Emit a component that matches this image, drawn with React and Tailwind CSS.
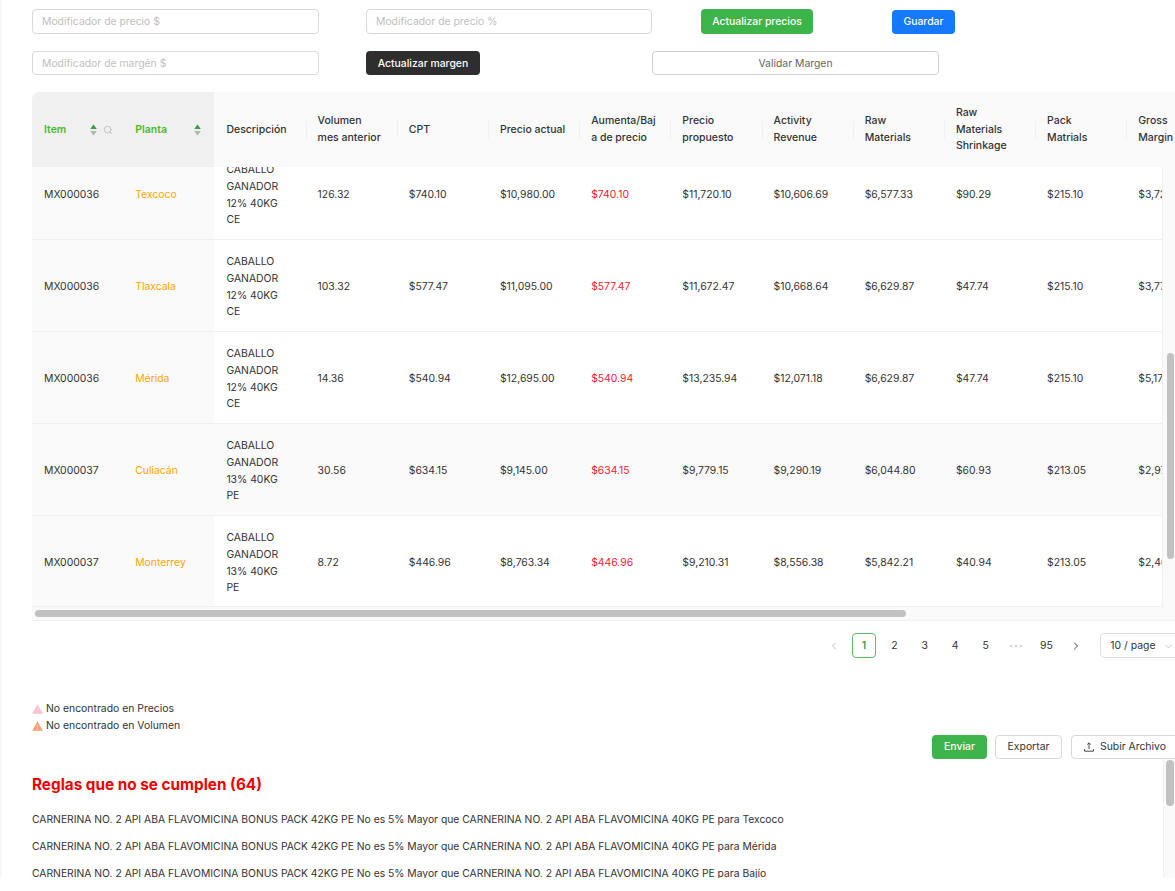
import React from 'react'
import { ChevronLeft, ChevronRight, ChevronDown, Search } from 'lucide-react'

const font = { fontFamily: 'Inter, sans-serif' }

const columns = [
  { title: ['Descripción'] },
  { title: ['Volumen', 'mes anterior'] },
  { title: ['CPT'] },
  { title: ['Precio actual'] },
  { title: ['Aumenta/Baj', 'a de precio'] },
  { title: ['Precio', 'propuesto'] },
  { title: ['Activity', 'Revenue'] },
  { title: ['Raw', 'Materials'] },
  { title: ['Raw', 'Materials', 'Shrinkage'] },
  { title: ['Pack', 'Matrials'] },
  { title: ['Gross', 'Margin'] },
]

const rows = [
  ['MX000036', 'Texcoco', '12% 40KG', 'CE', '126.32', '$740.10', '$10,980.00', '$740.10', '$11,720.10', '$10,606.69', '$6,577.33', '$90.29', '$215.10', '$3,723.97'],
  ['MX000036', 'Tlaxcala', '12% 40KG', 'CE', '103.32', '$577.47', '$11,095.00', '$577.47', '$11,672.47', '$10,668.64', '$6,629.87', '$47.74', '$215.10', '$3,775.93'],
  ['MX000036', 'Mérida', '12% 40KG', 'CE', '14.36', '$540.94', '$12,695.00', '$540.94', '$13,235.94', '$12,071.18', '$6,629.87', '$47.74', '$215.10', '$5,178.47'],
  ['MX000037', 'Culiacán', '13% 40KG', 'PE', '30.56', '$634.15', '$9,145.00', '$634.15', '$9,779.15', '$9,290.19', '$6,044.80', '$60.93', '$213.05', '$2,971.41'],
  ['MX000037', 'Monterrey', '13% 40KG', 'PE', '8.72', '$446.96', '$8,763.34', '$446.96', '$9,210.31', '$8,556.38', '$5,842.21', '$40.94', '$213.05', '$2,460.18'],
]

const rules = ['Texcoco', 'Mérida', 'Bajío']

function SortIcon() {
  return (
    <svg width="7" height="12" viewBox="0 0 7 12" className="block shrink-0">
      <path d="M3.5 0.5 L6.8 5 H0.2 Z" fill="#3a9d48" />
      <path d="M3.5 11.5 L6.8 7 H0.2 Z" fill="#b4b4b4" />
    </svg>
  )
}

function WarnIcon({ color }) {
  return (
    <svg width="11" height="10" viewBox="0 0 11 10" className="shrink-0">
      <path d="M5.5 0.3 L10.9 9.7 H0.1 Z" fill={color} />
      <path d="M5.5 3.6 V6.6 M5.5 7.4 V8.2" stroke="#fff" strokeOpacity="0.45" strokeWidth="0.9" />
    </svg>
  )
}

function UploadIcon() {
  return (
    <svg width="10" height="10" viewBox="0 0 10 10" fill="none" stroke="#333" strokeWidth="0.9" className="shrink-0">
      <path d="M5 7 V1 M3.2 2.6 L5 0.8 L6.8 2.6" />
      <path d="M0.6 7 V9.2 H9.4 V7" />
    </svg>
  )
}

function Cell({ children, className = '' }) {
  return <div className={`w-[91.2px] shrink-0 overflow-hidden whitespace-nowrap px-3 pt-[4px] ${className}`}>{children}</div>
}

function Row({ row, index }) {
  const [item, planta, d1, d2, volumen, cpt, actual, aumenta, ...rest] = row
  const shaded = index === 3
  return (
    <div className={`flex h-[92px] shrink-0 items-center border-b border-[#f0f0f0] ${shaded ? 'bg-[#fafafa]' : 'bg-white'}`}>
      <Cell className="flex h-full items-center bg-[#fafafa]">{item}</Cell>
      <Cell className="flex h-full items-center bg-[#fafafa] text-[#ffa500]">{planta}</Cell>
      <Cell>
        <div>CABALLO</div>
        <div>GANADOR</div>
        <div>{d1}</div>
        <div>{d2}</div>
      </Cell>
      <Cell>{volumen}</Cell>
      <Cell>{cpt}</Cell>
      <Cell>{actual}</Cell>
      <Cell className="text-[#f5222d]">{aumenta}</Cell>
      {rest.map((value, i) => (
        <Cell key={i} className="!overflow-visible">{value}</Cell>
      ))}
    </div>
  )
}

function PageButton({ children, active }) {
  return (
    <div className={`flex h-[25px] w-6 shrink-0 items-center justify-center rounded pt-px ${active ? 'border border-[#5cbf6a] font-semibold text-[#3a9d48]' : ''}`}>
      {children}
    </div>
  )
}

export default function App() {
  return (
    <div style={font} className="relative h-[891px] w-[1175px] overflow-hidden bg-white text-[10.4px] leading-[16.8px] text-[#333]">
      <div className="absolute bottom-[14px] left-0 top-0 w-[2px] bg-[#f7f7f7]" />

      <div className="flex items-center pl-8 pt-[9px]">
        <input placeholder="Modificador de precio $" className="h-[25px] w-[287px] rounded border border-[#d9d9d9] px-[9px] placeholder-[#bfbfbf] outline-none" />
        <input placeholder="Modificador de precio %" className="ml-[47px] h-[25px] w-[286px] rounded border border-[#d9d9d9] px-[9px] placeholder-[#bfbfbf] outline-none" />
        <button className="ml-[49px] h-[25px] w-[112px] rounded bg-[#3cb44a] pt-px font-medium text-white">Actualizar precios</button>
        <button className="ml-[79px] h-[24px] w-[63px] rounded bg-[#1677ff] pt-px font-medium text-white">Guardar</button>
      </div>

      <div className="mt-[17px] flex items-center pl-8">
        <input placeholder="Modificador de margén $" className="h-[24px] w-[287px] rounded border border-[#d9d9d9] px-[9px] placeholder-[#bfbfbf] outline-none" />
        <button className="ml-[47px] h-[24px] w-[114px] rounded bg-[#2e2e2e] pt-[2px] font-medium text-white">Actualizar margen</button>
        <button className="ml-[172px] h-[24px] w-[287px] rounded border border-[#d0d0d0] pt-[2px] text-[#666]">Validar Margen</button>
      </div>

      <div className="relative ml-8 mt-[17px] overflow-hidden">
        <div className="flex h-[75px] items-center overflow-hidden rounded-tl-lg bg-[#fafafa] text-[10.5px] font-medium">
          <div className="flex h-full w-[182.4px] shrink-0 items-center bg-[#f0f0f0] font-semibold text-[#4cb82f]">
            <div className="flex w-[91.2px] items-center px-3 pt-px">
              <span>Item</span>
              <span className="ml-auto"><SortIcon /></span>
              <Search size={10} className="-mr-[2px] ml-[6px] shrink-0 text-[#bdbdbd]" />
            </div>
            <div className="flex w-[91.2px] items-center px-3 pt-px">
              <span>Planta</span>
              <span className="ml-auto mr-px"><SortIcon /></span>
            </div>
          </div>
          {columns.map((col, i) => (
            <div key={i} className="relative w-[91.2px] shrink-0 px-3 pt-px">
              {col.title.map((line) => (
                <div key={line} className="whitespace-nowrap">{line}</div>
              ))}
              {i > 0 && <div className="absolute left-0 top-1/2 h-[18px] w-px -translate-y-1/2 bg-[#f0f0f0]" />}
            </div>
          ))}
        </div>

        <div className="bg-[#fafafa] pr-3">
          <div className="h-[440px] overflow-hidden border-b border-r border-[#f0f0f0] bg-white">
            <div className="-mt-[19px] flex flex-col">
              {rows.map((row, i) => (
                <Row key={i} row={row} index={i} />
              ))}
            </div>
          </div>
        </div>

        <div className="h-[14px] border-b border-[#f0f0f0] bg-[#fafafa] pl-[3px] pt-[3px]">
          <div className="h-[7px] w-[871px] rounded-full bg-[#c1c1c1]" />
        </div>

        <div className="absolute right-[1px] top-[261px] h-[206px] w-[7px] rounded-full bg-[#c1c1c1]" />
      </div>

      <div className="mt-3 flex h-[25px] items-center pl-[828px]">
        <ChevronLeft size={12} className="mr-[12px] shrink-0 text-[#c4c4c4]" />
        <PageButton active>1</PageButton>
        <div className="ml-[6.4px]"><PageButton>2</PageButton></div>
        <div className="ml-[6.4px]"><PageButton>3</PageButton></div>
        <div className="ml-[6.4px]"><PageButton>4</PageButton></div>
        <div className="ml-[6.4px]"><PageButton>5</PageButton></div>
        <div className="ml-[6.4px] flex w-6 shrink-0 justify-center gap-[3px]">
          <span className="h-[2px] w-[2px] rounded-full bg-[#c4c4c4]" />
          <span className="h-[2px] w-[2px] rounded-full bg-[#c4c4c4]" />
          <span className="h-[2px] w-[2px] rounded-full bg-[#c4c4c4]" />
        </div>
        <div className="ml-[6.4px]"><PageButton>95</PageButton></div>
        <ChevronRight size={12} className="ml-[12px] shrink-0 text-[#444]" />
        <div className="ml-[18px] flex h-[25px] w-[90px] shrink-0 items-center rounded border border-[#e0e0e0] pl-[9px] pt-px">
          10 / page
          <ChevronDown size={11} className="ml-[8px] shrink-0 text-[#c4c4c4]" />
        </div>
      </div>

      <div className="mt-[43px] pl-8">
        <div className="flex items-center gap-[3px]">
          <WarnIcon color="#ffc0cb" />
          <span>No encontrado en Precios</span>
        </div>
        <div className="flex items-center gap-[3px]">
          <WarnIcon color="#ffa07a" />
          <span>No encontrado en Volumen</span>
        </div>
      </div>

      <div className="flex justify-end">
        <div className="flex w-[243px] shrink-0 items-center">
          <button className="h-6 w-[55px] shrink-0 rounded bg-[#3cb44a] pt-[2px] font-medium text-white">Enviar</button>
          <button className="ml-2 h-6 w-[67px] shrink-0 rounded border border-[#d9d9d9] pt-[2px]">Exportar</button>
          <button className="ml-[9px] flex h-6 w-[112px] shrink-0 items-center gap-[6px] rounded border border-[#d9d9d9] pl-[12px] pt-px">
            <UploadIcon />
            Subir Archivo
          </button>
        </div>
      </div>

      <div className="relative h-[119px] overflow-hidden pl-8 pt-[14px]">
        <div className="text-[15.3px] leading-6 font-bold text-[#f00000]">Reglas que no se cumplen (64)</div>
        <div className="mt-[14px] flex flex-col gap-[10.4px] text-[10.33px]">
          {rules.map((r) => (
            <div key={r} className="whitespace-nowrap">CARNERINA NO. 2 API ABA FLAVOMICINA BONUS PACK 42KG PE No es 5% Mayor que CARNERINA NO. 2 API ABA FLAVOMICINA 40KG PE para {r}</div>
          ))}
        </div>
        <div className="absolute bottom-0 right-0 top-0 w-3 border-l border-[#f0f0f0] bg-[#fafafa]" />
        <div className="absolute right-[1px] top-[1px] h-[46px] w-[8px] rounded-full bg-[#c1c1c1]" />
      </div>
    </div>
  )
}
